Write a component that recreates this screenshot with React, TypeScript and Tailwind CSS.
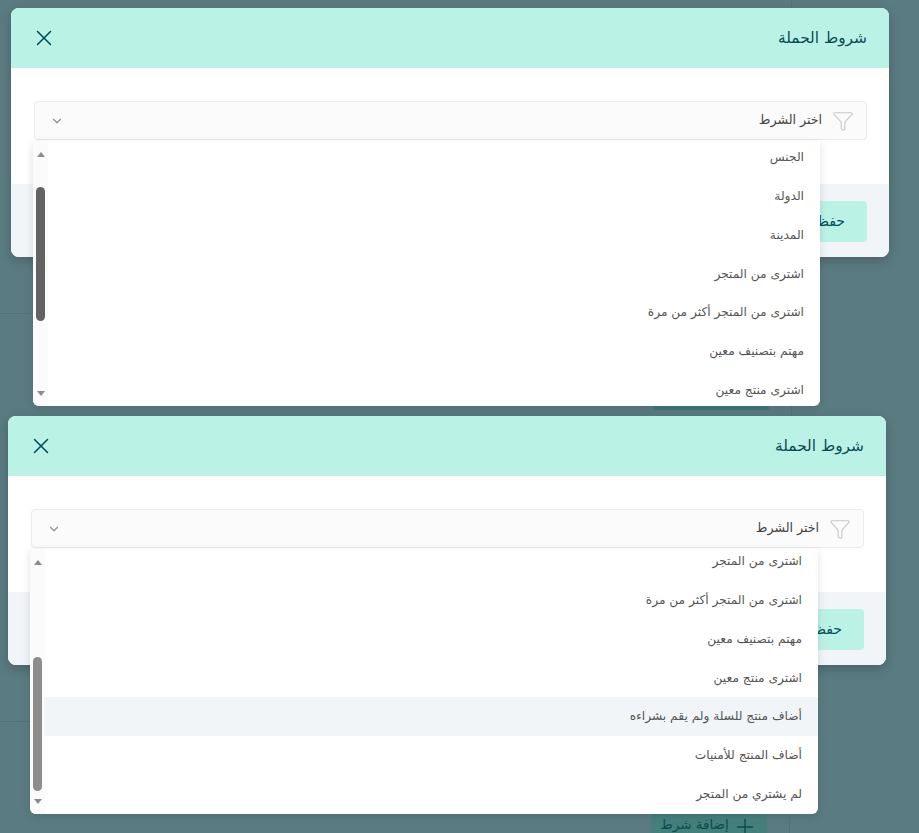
import React from 'react';
import { X, ChevronDown, Funnel, Plus } from 'lucide-react';

const FONT = "font-['DejaVu_Sans',sans-serif]";

const firstOptions = [
  'الجنس',
  'الدولة',
  'المدينة',
  'اشترى من المتجر',
  'اشترى من المتجر أكثر من مرة',
  'مهتم بتصنيف معين',
  'اشترى منتج معين',
];

const secondOptions = [
  'اشترى من المتجر',
  'اشترى من المتجر أكثر من مرة',
  'مهتم بتصنيف معين',
  'اشترى منتج معين',
  'أضاف منتج للسلة ولم يقم بشراءه',
  'أضاف المنتج للأمنيات',
  'لم يشتري من المتجر',
];

// the dimmed page that shows behind the two modals
function DimmedPage() {
  return (
    <>
      <div className="absolute left-[791px] top-0 h-[416px] w-px bg-[#537278]" />
      <div className="absolute left-[789px] top-[665px] h-[168px] w-px bg-[#537278]" />
      <div className="absolute left-0 top-[313px] h-px w-[33px] bg-[#537278]" />
      <div className="absolute left-0 top-[721px] h-px w-[30px] bg-[#537278]" />
      <div className="absolute left-[653px] top-[396px] h-[14px] w-[116px] bg-[#3f7a79]" />
      <div className="absolute left-[651px] top-[814px] flex h-[30px] w-[116px] items-start justify-center gap-[3px] bg-[#457f7c]">
        <span dir="rtl" className="text-[13.5px] text-[#0d4a4f]">إضافة شرط</span>
        <Plus size={26} strokeWidth={1.25} className="text-[#0d4a4f]" />
      </div>
    </>
  );
}

function App() {
  return (
    <div dir="ltr" className={`relative h-[833px] w-[919px] overflow-hidden bg-[#5a7b82] ${FONT}`}>
      <DimmedPage />
      <ConditionsModal
        className="relative ml-[11px] pt-[8px]"
        options={firstOptions}
        listTop="-mt-[3px]"
        thumbClass="mt-[30px] bg-[#636363]"
        width="w-[787px]"
      />
      <ConditionsModal
        className="relative ml-[8px] pt-[159px]"
        options={secondOptions}
        listTop="-mt-[7px]"
        hovered={4}
        thumbClass="mt-[92px] bg-[#8c8c8c]"
        width="w-[788px]"
      />
    </div>
  );
}

function ConditionsModal({
  className,
  options,
  listTop,
  hovered,
  thumbClass,
  width,
}: {
  className: string;
  options: string[];
  listTop: string;
  hovered?: number;
  thumbClass: string;
  width: string;
}) {
  return (
    <div className={className}>
      <div className="relative w-[878px] rounded-lg bg-white shadow-[0_4px_12px_rgba(0,0,0,0.2)]">
        <div className="flex h-[60px] items-center justify-between rounded-t-lg bg-[#baf3e6] pl-[20px] pr-[22px]">
          <X size={26} strokeWidth={1.4} className="text-[#004d5a]" />
          <h2 dir="rtl" className="mt-[1px] text-[15.4px] font-medium text-[#0b4a52]">شروط الحملة</h2>
        </div>

        <div className="h-[116px] pl-[23px] pr-[22px] pt-[33px]">
          <div className="relative flex h-[39px] items-center justify-between rounded border border-[#ebebeb] bg-[#fbfbfb] pl-[15px] pr-[12px]">
            <ChevronDown size={14} className="text-[#8a8f96]" />
            <div dir="rtl" className="flex items-center gap-[10px]">
              <Funnel size={22} strokeWidth={1.25} className="text-[#c9c9c9]" />
              <span className="text-[12.6px] text-[#444]">اختر الشرط</span>
            </div>
            <div className={`absolute left-[-2px] top-[39px] z-10 flex h-[265px] ${width} overflow-hidden rounded-b-md bg-white shadow-[0_2px_8px_rgba(0,0,0,0.12)]`}>
              <div className="flex h-full w-[15px] shrink-0 flex-col items-center bg-[#fbfbfb] pt-[11px]">
                <div className="h-0 w-0 border-x-[4.5px] border-b-[5px] border-x-transparent border-b-[#8c8c8c]" />
                <div className={`h-[134px] w-[9px] rounded-[5px] ${thumbClass}`} />
                <div className="mt-auto mb-[10px] h-0 w-0 border-x-[4.5px] border-t-[5px] border-x-transparent border-t-[#8c8c8c]" />
              </div>
              <ul dir="rtl" className={`flex-1 ${listTop}`}>
                {options.map((option, i) => (
                  <li
                    key={option}
                    className={`flex h-[38.8px] items-center px-4 text-[12.2px] text-[#555] ${i === hovered ? 'bg-[#f1f5f8]' : ''}`}
                  >
                    {option}
                  </li>
                ))}
              </ul>
            </div>
          </div>
        </div>

        <div className="flex h-[73px] justify-end rounded-b-lg bg-[#f1f5f8] px-[22px] pt-[17px]">
          <button dir="rtl" className="h-[41px] w-[120px] rounded bg-[#baf3e6] pr-[22px] text-right text-[14px] text-[#004d5a]">
            حفظ
          </button>
        </div>
      </div>
    </div>
  );
}

export default App;
